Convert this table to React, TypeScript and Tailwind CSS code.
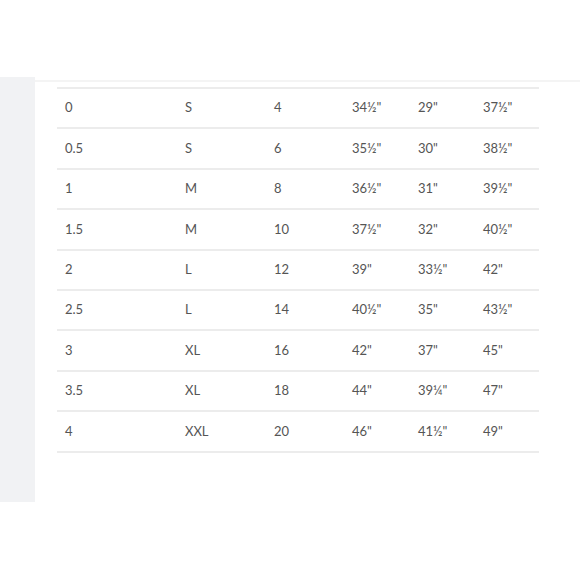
const rows: string[][] = [
  ['0', 'S', '4', '34½"', '29"', '37½"'],
  ['0.5', 'S', '6', '35½"', '30"', '38½"'],
  ['1', 'M', '8', '36½"', '31"', '39½"'],
  ['1.5', 'M', '10', '37½"', '32"', '40½"'],
  ['2', 'L', '12', '39"', '33½"', '42"'],
  ['2.5', 'L', '14', '40½"', '35"', '43½"'],
  ['3', 'XL', '16', '42"', '37"', '45"'],
  ['3.5', 'XL', '18', '44"', '39¼"', '47"'],
  ['4', 'XXL', '20', '46"', '41½"', '49"'],
];

export default function App() {
  return (
    <div className="h-[580px] w-[580px] overflow-hidden bg-white" style={{ fontFamily: 'Lato, "Open Sans", sans-serif' }}>
      <div className="flex pt-[77px]">
        <aside className="h-[425px] w-[35px] shrink-0 bg-[#f1f2f4]" />
        <div className="flex-1">
          <div className="mt-[3px] border-t-2 border-[#f4f4f4] pl-[22px] pr-[41px] pt-[5px]">
            <div className="border-t-2 border-[#ececec]">
              {rows.map((row) => (
                <div
                  className="grid h-[40.4px] grid-cols-[120px_89px_78px_66px_65px_1fr] items-center border-b-2 border-[#ececec] pl-2 text-[13px] text-[#555]"
                  key={row[0]}
                >
                  {row.map((cell, i) => (
                    <span key={i}>{cell}</span>
                  ))}
                </div>
              ))}
            </div>
          </div>
        </div>
      </div>
    </div>
  );
}
